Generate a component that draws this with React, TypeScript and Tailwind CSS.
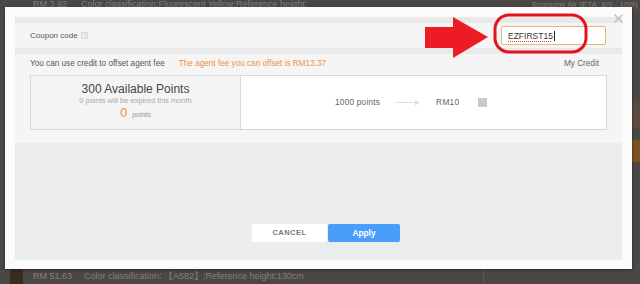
import React from "react";

export default function App() {
  return (
    <div
      className="relative w-[640px] h-[284px] overflow-hidden bg-[#4b4744]"
      style={{ fontFamily: '"Liberation Sans", Arial, sans-serif' }}
    >
      {/* background page */}
      <div className="flex flex-col h-full">
        <div className="h-[10px] flex items-center text-[9px] text-[#827e7a] whitespace-nowrap">
          <div className="w-[532px] flex items-center shrink-0">
            <span className="pl-[33px]">RM 3.92</span>
            <span className="ml-[14px]">Color classification:Fluorescent Yellow;Reference height:</span>
          </div>
          <span className="shrink-0 text-[8px]">Economy Air (ETA: 8/9 - 10/9)</span>
        </div>
        <div className="flex-1 flex justify-end">
          <div className="w-[8px] flex flex-col pt-[90px]">
            <div className="h-[28px] bg-[#5a4a40]" />
            <div className="h-[12px]" />
            <div className="h-[22px] bg-[#7a5320]" />
          </div>
        </div>
        <div className="h-[15px] flex items-center text-[9px] text-[#827e7a] whitespace-nowrap">
          <div className="ml-[10px] w-[13px] h-full bg-[#3b2c22]" />
          <span className="ml-[10px]">RM 51.63</span>
          <span className="ml-[12px]">Color classification: 【A582】;Reference height:130cm</span>
          <div className="ml-auto mr-[156px] w-px h-full bg-[#5c5855]" />
        </div>
      </div>

      {/* modal */}
      <div className="absolute left-[5px] top-[7px] w-[627px] h-[262px] bg-[#fbfbfb] px-[10px] pt-[10px] pb-[9px] shadow-[0_1px_3px_rgba(0,0,0,0.45)]">
        <div className="absolute right-[9px] top-[7px] w-[9px] h-[9px]">
          <svg width="9" height="9" viewBox="0 0 9 9">
            <path d="M0.5 0.5L8.5 8.5M8.5 0.5L0.5 8.5" stroke="#bcbcbc" strokeWidth="1.2" />
          </svg>
        </div>
        <div className="flex flex-col h-full">
          <div className="h-[6px] bg-[#e9e9e9]" />
          <div className="h-[25px] bg-[#f5f5f5] flex items-center pl-[15px] pr-[16px]">
            <span className="text-[8px] text-[#555]">Coupon code</span>
            <span className="ml-[3px] w-[7px] h-[7px] bg-[#e8e8e8] border border-[#dcdcdc]" />
            <div className="ml-auto w-[105px] h-[19px] border border-[#e8b574] rounded-[2px] bg-white flex items-center pl-[6px]">
              <span className="text-[8.5px] leading-[10px] text-[#333] underline decoration-dotted decoration-[#e33] decoration-[1px] underline-offset-[2px]">
                EZFIRST15
              </span>
              <span className="w-px h-[10px] bg-[#222] ml-px" />
            </div>
          </div>
          <div className="h-[6px] bg-[#e9e9e9]" />
          <div className="bg-[#f5f5f5] px-[15px] pb-[13px]">
            <div className="h-[21px] flex items-center text-[8.2px] whitespace-nowrap pr-[8px]">
              <span className="text-[#555]">You can use credit to offset agent fee</span>
              <span className="ml-[14px] text-[#f0913f]">The agent fee you can offset is RM13.37</span>
              <span className="ml-auto text-[#666]">My Credit</span>
            </div>
            <div className="h-[55px] border border-[#d7d7d7] flex">
              <div className="w-[210px] bg-[#f4f4f4] border-r border-[#d7d7d7] flex flex-col items-center pt-[6px]">
                <div className="text-[12px] leading-[14px] text-[#444]">300 Available Points</div>
                <div className="text-[7.5px] leading-[10px] text-[#aaa]">0 points will be expired this month</div>
                <div className="flex items-baseline leading-[14px]">
                  <span className="text-[12.5px] text-[#f0913f]">0</span>
                  <span className="ml-[5px] text-[7px] text-[#999]">points</span>
                </div>
              </div>
              <div className="flex-1 bg-white flex items-center pl-[94px] text-[8.3px] text-[#666] whitespace-nowrap">
                <span className="tracking-[0.2px]">1000 points</span>
                <svg className="ml-[15px]" width="25" height="7" viewBox="0 0 25 7">
                  <path d="M0 3.5H21" stroke="#d6e1e9" strokeWidth="1" />
                  <path d="M20 0.5L24.5 3.5L20 6.5Z" fill="#d6e1e9" />
                </svg>
                <span className="ml-[16px] tracking-[0.3px]">RM10</span>
                <span className="ml-[19px] w-[9px] h-[9px] bg-[#c9c9c9]" />
              </div>
            </div>
          </div>
          <div className="flex-1 bg-[#ebecee] flex items-end justify-center pb-[18px] pl-[15px]">
            <div className="flex">
              <div className="w-[75px] h-[18px] bg-white flex items-center justify-center text-[7.5px] font-bold tracking-[0.5px] text-[#777]">
                CANCEL
              </div>
              <div className="ml-px w-[72px] h-[18px] bg-[#4a9dfb] rounded-[2px] flex items-center justify-center text-[8.3px] font-bold text-white">
                Apply
              </div>
            </div>
          </div>
        </div>
      </div>

      {/* red annotation */}
      <svg className="absolute left-0 top-0 pointer-events-none" width="640" height="284" viewBox="0 0 640 284">
        <polygon points="425,27 453,27 453,17 488,37 453,58 453,48 425,48" fill="#ed1c24" />
        <rect x="495" y="15" width="91" height="37" rx="14" fill="none" stroke="#e3151c" strokeWidth="3" />
      </svg>
    </div>
  );
}
